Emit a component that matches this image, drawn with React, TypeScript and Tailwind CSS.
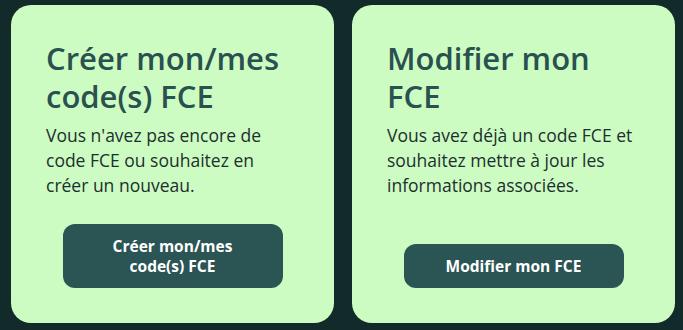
export default function App() {
  const cards = [
    {
      title: ["Créer mon/mes", "code(s) FCE"],
      body: ["Vous n'avez pas encore de", "code FCE ou souhaitez en", "créer un nouveau."],
      button: ["Créer mon/mes", "code(s) FCE"],
    },
    {
      title: ["Modifier mon", "FCE"],
      body: ["Vous avez déjà un code FCE et", "souhaitez mettre à jour les", "informations associées."],
      button: ["Modifier mon FCE"],
    },
  ];

  return (
    <div
      className="w-[683px] h-[330px] bg-[#122a2a] pt-[5px] pl-[11px] flex gap-[18px]"
      style={{ fontFamily: "'Open Sans', Lato, sans-serif" }}
    >
      {cards.map((c) => (
        <div
          key={c.title.join(" ")}
          className="w-[323px] h-[318px] bg-[#ccfcc1] rounded-[20px] pt-[34px] px-[35px] pb-[35px] flex flex-col"
        >
          <h2 className="text-[31px] leading-[38px] font-semibold text-[#2a5050] whitespace-nowrap">
            {c.title[0]}
            <br />
            {c.title[1]}
          </h2>
          <p className="mt-[8px] text-[17.5px] leading-[25px] text-[#1c2f2f] whitespace-nowrap">
            {c.body.map((l, i) => (
              <span key={i}>
                {l}
                <br />
              </span>
            ))}
          </p>
          <button
            type="button"
            className="mt-auto self-center w-[220px] rounded-[12px] bg-[#2a5554] text-white font-bold text-[15.5px] leading-[20px] py-[12px]"
          >
            {c.button.map((l, i) => (
              <span key={i} className="block">
                {l}
              </span>
            ))}
          </button>
        </div>
      ))}
    </div>
  );
}
